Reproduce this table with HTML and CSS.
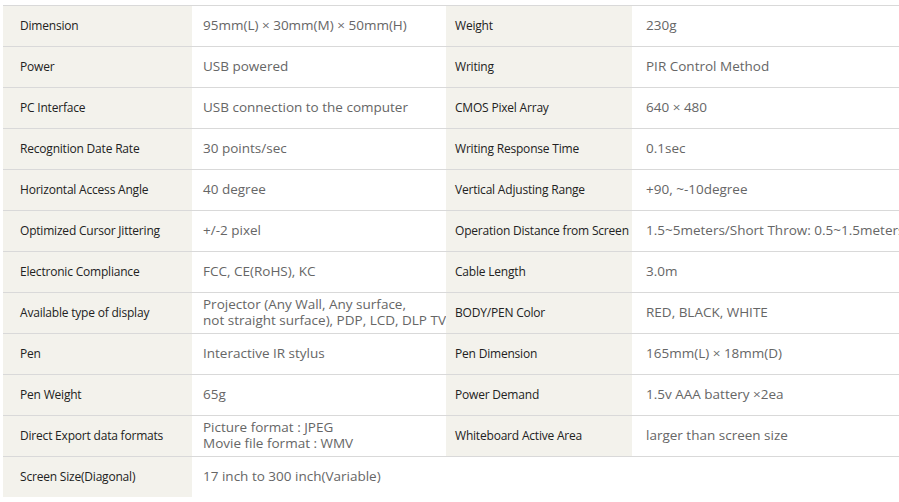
FILE: index.html
```html
<!DOCTYPE html>
<html>
<head>
<meta charset="utf-8">
<link rel="stylesheet" href="styles.css">
</head>
<body>
<div class="spec">
  <div class="lbl">Dimension</div><div class="val">95mm(L) × 30mm(M) × 50mm(H)</div>
  <div class="lbl lbl-r">Weight</div><div class="val val-r">230g</div>

  <div class="lbl">Power</div><div class="val">USB powered</div>
  <div class="lbl lbl-r">Writing</div><div class="val val-r">PIR Control Method</div>

  <div class="lbl">PC Interface</div><div class="val">USB connection to the computer</div>
  <div class="lbl lbl-r">CMOS Pixel Array</div><div class="val val-r">640 × 480</div>

  <div class="lbl">Recognition Date Rate</div><div class="val">30 points/sec</div>
  <div class="lbl lbl-r">Writing Response Time</div><div class="val val-r">0.1sec</div>

  <div class="lbl">Horizontal Access Angle</div><div class="val">40 degree</div>
  <div class="lbl lbl-r">Vertical Adjusting Range</div><div class="val val-r">+90, ~-10degree</div>

  <div class="lbl">Optimized Cursor Jittering</div><div class="val">+/-2 pixel</div>
  <div class="lbl lbl-r">Operation Distance from Screen</div><div class="val val-r">1.5~5meters/Short Throw: 0.5~1.5meters</div>

  <div class="lbl">Electronic Compliance</div><div class="val">FCC, CE(RoHS), KC</div>
  <div class="lbl lbl-r">Cable Length</div><div class="val val-r">3.0m</div>

  <div class="lbl">Available type of display</div><div class="val"><div class="lines"><span>Projector (Any Wall, Any surface,</span><span>not straight surface), PDP, LCD, DLP TV</span></div></div>
  <div class="lbl lbl-r">BODY/PEN Color</div><div class="val val-r">RED, BLACK, WHITE</div>

  <div class="lbl">Pen</div><div class="val">Interactive IR stylus</div>
  <div class="lbl lbl-r">Pen Dimension</div><div class="val val-r">165mm(L) × 18mm(D)</div>

  <div class="lbl">Pen Weight</div><div class="val">65g</div>
  <div class="lbl lbl-r">Power Demand</div><div class="val val-r">1.5v AAA battery ×2ea</div>

  <div class="lbl">Direct Export data formats</div><div class="val"><div class="lines"><span>Picture format : JPEG</span><span>Movie file format : WMV</span></div></div>
  <div class="lbl lbl-r">Whiteboard Active Area</div><div class="val val-r">larger than screen size</div>

  <div class="lbl last">Screen Size(Diagonal)</div><div class="val last">17 inch to 300 inch(Variable)</div>
  <div class="empty last"></div><div class="empty last"></div>
</div>
</body>
</html>
```
FILE: styles.css
```css
html, body {
  margin: 0;
  padding: 0;
  background: #fff;
  overflow: hidden;
}
.spec {
  display: grid;
  grid-template-columns: 189px 254px 186px minmax(0, 1fr);
  grid-auto-rows: 41px;
  margin: 5px 0 0 3px;
  font-family: "Open Sans", "Noto Sans CJK KR", sans-serif;
}
.lbl, .val, .empty {
  border-top: 1px solid #d9d9d9;
  display: flex;
  align-items: center;
  box-sizing: border-box;
  white-space: nowrap;
  padding-bottom: 1px;
}
.last {
  border-bottom: 1px solid #d9d9d9;
  height: 42px;
}
.lbl {
  background: #f3f2ec;
  color: #222;
  font-size: 12px;
  letter-spacing: -0.2px;
  padding-left: 17px;
}
.lbl-r {
  padding-left: 9px;
}
.val {
  color: #666;
  font-size: 13.5px;
  line-height: 16px;
  padding-left: 11px;
  padding-bottom: 3px;
}
.val-r {
  padding-left: 14px;
}
.lines {
  display: flex;
  flex-direction: column;
}
```
